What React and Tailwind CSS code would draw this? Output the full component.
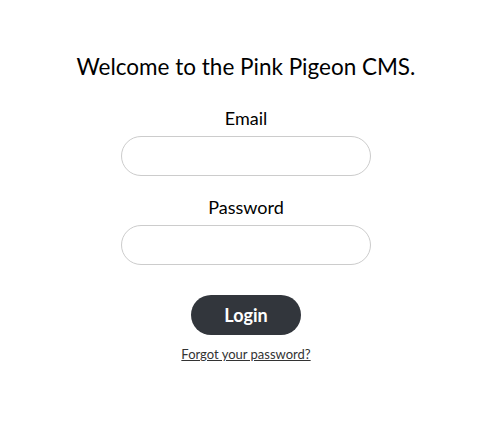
import React from 'react';

const App = () => {
  return (
    <div className="w-[492px] bg-white pt-[49px] flex flex-col items-center font-['Lato',sans-serif] text-black">
      <h1 className="text-[22.5px] leading-[36px]">Welcome to the Pink Pigeon CMS.</h1>
      <form className="flex flex-col items-center mt-[21px]" onSubmit={e => e.preventDefault()}>
        <label className="text-[18px] leading-[24px]">Email</label>
        <input type="email" className="mt-[6px] w-[250px] h-[40px] rounded-full border border-[#cccccc] outline-none px-4" />
        <label className="text-[18px] leading-[24px] mt-[19px]">Password</label>
        <input type="password" className="mt-[6px] w-[250px] h-[40px] rounded-full border border-[#cccccc] outline-none px-4" />
        <button type="submit" className="mt-[30px] w-[110px] h-[40px] rounded-full bg-[#32363c] text-white text-[18px] font-bold">
          Login
        </button>
        <a href="#" className="mt-[10px] text-[13px] leading-[18px] text-[#333333] underline">
          Forgot your password?
        </a>
      </form>
    </div>
  );
};

export default App;
